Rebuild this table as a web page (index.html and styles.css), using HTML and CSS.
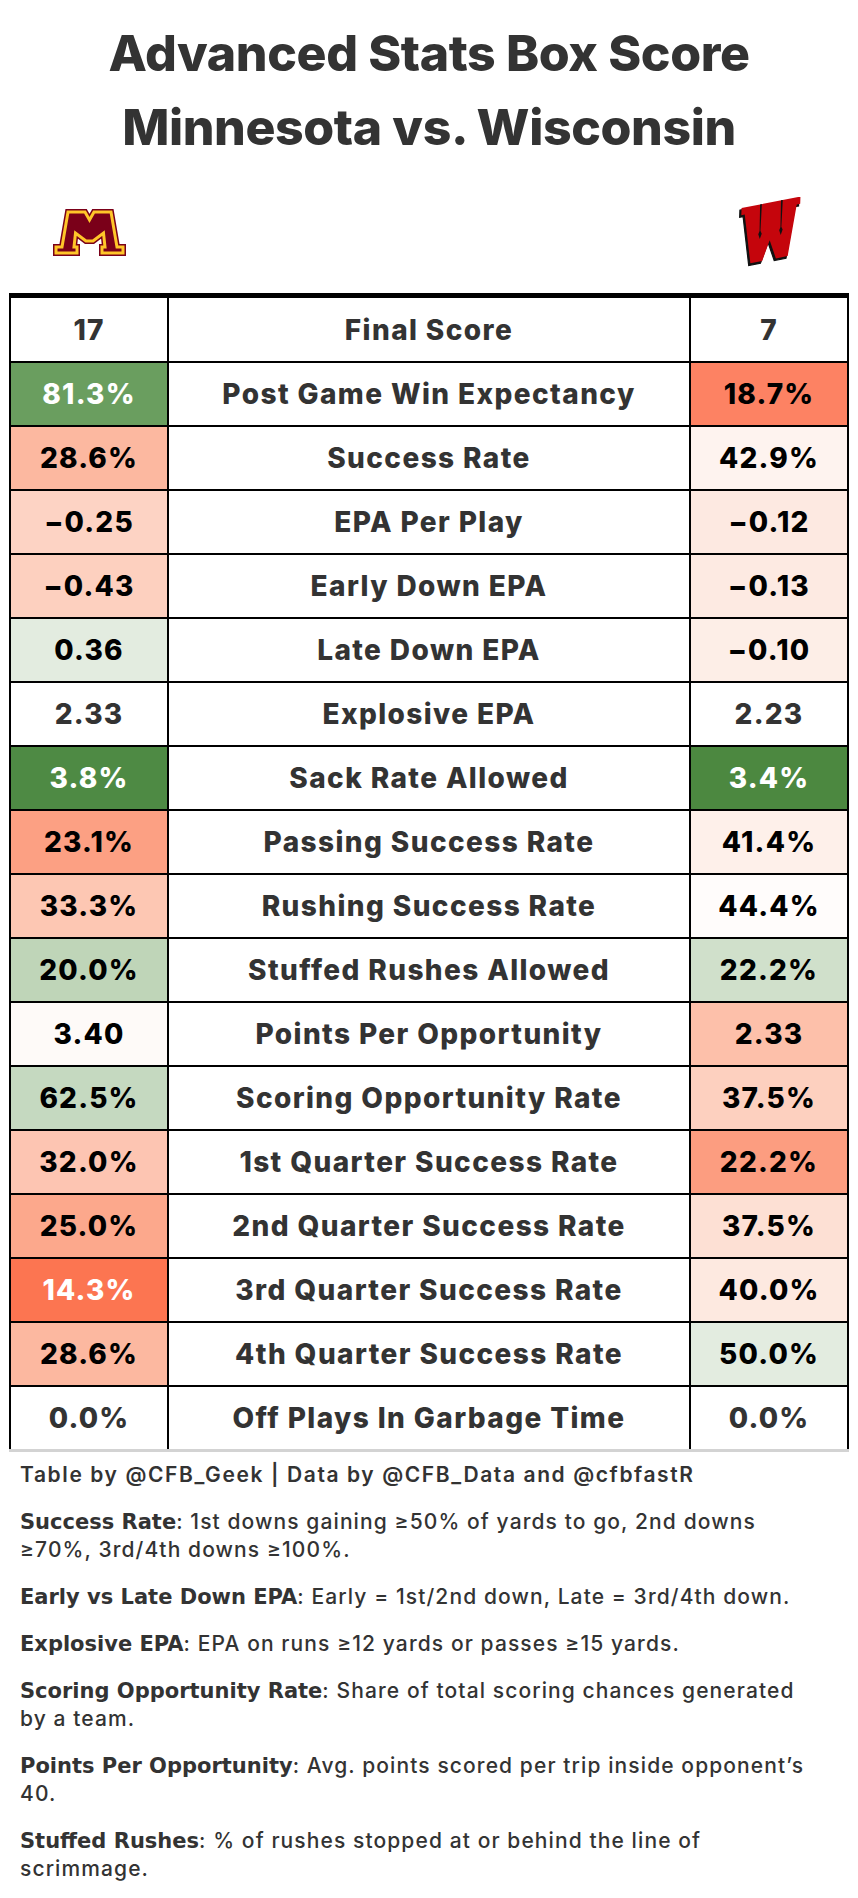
FILE: index.html
```html
<!DOCTYPE html>
<html lang="en">
<head>
<meta charset="utf-8">
<title>Advanced Stats Box Score</title>
<link rel="stylesheet" href="styles.css">
</head>
<body>
<div class="page">
  <h1 class="title">Advanced Stats Box Score<br>Minnesota vs. Wisconsin</h1>

  <div class="logos">
    <div class="logo-cell">
      <svg class="logo-m" viewBox="0 0 75 49" width="75" height="49" aria-label="Minnesota">
        <path d="M16,4 H33 L37.5,12 L42,4 H59 L65,39 H71 V45 H50 V39 H53 L51.5,25 L41,33 H34 L23.5,25 L22,39 H25 V45 H4 V39 H10 Z" fill="#7a0019" stroke="#7a0019" stroke-width="6"/>
        <path d="M16,4 H33 L37.5,12 L42,4 H59 L65,39 H71 V45 H50 V39 H53 L51.5,25 L41,33 H34 L23.5,25 L22,39 H25 V45 H4 V39 H10 Z" fill="#7a0019" stroke="#ffc629" stroke-width="3"/>
      </svg>
    </div>
    <div></div>
    <div class="logo-cell">
      <svg class="logo-w" viewBox="0 0 70 70" width="70" height="70" aria-label="Wisconsin">
        <g transform="translate(36 34) rotate(-11) skewX(-13) translate(-30 -28)">
          <path transform="translate(-1.6 1.8)" d="M0,0 H60 V7 H56.5 L49,56 H37 L30,37 L23,56 H11 L3.5,7 H0 Z" fill="#111" stroke="#111" stroke-width="1.2"/>
          <path d="M0,0 H60 V7 H56.5 L49,56 H37 L30,37 L23,56 H11 L3.5,7 H0 Z" fill="#c5050c"/>
          <path d="M18.9,0 H20.7 L20.2,26 L21.6,29 L19.8,34 L18.1,29 L19.3,26 Z" fill="#111"/>
          <path d="M40.2,0 H42 L41.5,26 L42.9,29 L41.1,34 L39.4,29 L40.6,26 Z" fill="#111"/>
        </g>
      </svg>
    </div>
  </div>

  <div class="box">
    <div class="cell">17</div><div class="cell label">Final Score</div><div class="cell">7</div>

    <div class="cell on-dark" style="background:#6a9e5f">81.3%</div><div class="cell label">Post Game Win Expectancy</div><div class="cell val" style="background:#fd8263">18.7%</div>

    <div class="cell val" style="background:#fcb8a0">28.6%</div><div class="cell label">Success Rate</div><div class="cell val" style="background:#fef3ef">42.9%</div>

    <div class="cell val" style="background:#fdd3c4">−0.25</div><div class="cell label">EPA Per Play</div><div class="cell val" style="background:#fde9e1">−0.12</div>

    <div class="cell val" style="background:#fdd0bf">−0.43</div><div class="cell label">Early Down EPA</div><div class="cell val" style="background:#fdeae2">−0.13</div>

    <div class="cell val" style="background:#e3ece0">0.36</div><div class="cell label">Late Down EPA</div><div class="cell val" style="background:#fdeee7">−0.10</div>

    <div class="cell">2.33</div><div class="cell label">Explosive EPA</div><div class="cell">2.23</div>

    <div class="cell on-dark" style="background:#4e8a44">3.8%</div><div class="cell label">Sack Rate Allowed</div><div class="cell on-dark" style="background:#4c8840">3.4%</div>

    <div class="cell val" style="background:#fca083">23.1%</div><div class="cell label">Passing Success Rate</div><div class="cell val" style="background:#fef0ea">41.4%</div>

    <div class="cell val" style="background:#fdc7b3">33.3%</div><div class="cell label">Rushing Success Rate</div><div class="cell val" style="background:#fffcfb">44.4%</div>

    <div class="cell val" style="background:#bfd5b8">20.0%</div><div class="cell label">Stuffed Rushes Allowed</div><div class="cell val" style="background:#d0e0cb">22.2%</div>

    <div class="cell val" style="background:#fefaf8">3.40</div><div class="cell label">Points Per Opportunity</div><div class="cell val" style="background:#fdc0aa">2.33</div>

    <div class="cell val" style="background:#c5d9c0">62.5%</div><div class="cell label">Scoring Opportunity Rate</div><div class="cell val" style="background:#fdd0bf">37.5%</div>

    <div class="cell val" style="background:#fdc5b2">32.0%</div><div class="cell label">1st Quarter Success Rate</div><div class="cell val" style="background:#fc9d80">22.2%</div>

    <div class="cell val" style="background:#fca88c">25.0%</div><div class="cell label">2nd Quarter Success Rate</div><div class="cell val" style="background:#fde0d4">37.5%</div>

    <div class="cell on-dark" style="background:#fc7551">14.3%</div><div class="cell label">3rd Quarter Success Rate</div><div class="cell val" style="background:#fde9e0">40.0%</div>

    <div class="cell val" style="background:#fcb8a0">28.6%</div><div class="cell label">4th Quarter Success Rate</div><div class="cell val" style="background:#e3ece0">50.0%</div>

    <div class="cell">0.0%</div><div class="cell label">Off Plays In Garbage Time</div><div class="cell">0.0%</div>
  </div>

  <div class="notes">
    <p class="credit">Table by @CFB_Geek | Data by @CFB_Data and @cfbfastR</p>
    <p><b>Success Rate</b>: 1st downs gaining ≥50% of yards to go, 2nd downs ≥70%, 3rd/4th downs ≥100%.</p>
    <p><b>Early vs Late Down EPA</b>: Early = 1st/2nd down, Late = 3rd/4th down.</p>
    <p><b>Explosive EPA</b>: EPA on runs ≥12 yards or passes ≥15 yards.</p>
    <p><b>Scoring Opportunity Rate</b>: Share of total scoring chances generated by a team.</p>
    <p><b>Points Per Opportunity</b>: Avg. points scored per trip inside opponent’s 40.</p>
    <p><b>Stuffed Rushes</b>: % of rushes stopped at or behind the line of scrimmage.</p>
  </div>
</div>
</body>
</html>
```

FILE: styles.css
```css
body {
  margin: 0;
  background: #fff;
  font-family: Inter, "Liberation Sans", sans-serif;
  color: #333;
}

.page {
  width: 840px;
  padding: 0 9px;
}

.title {
  margin: 0;
  padding-top: 16px;
  font-size: 50px;
  line-height: 74px;
  font-weight: 800;
  text-align: center;
  color: #333;
  letter-spacing: -0.4px;
}

.logos {
  display: grid;
  grid-template-columns: 160px 520px 160px;
  height: 122px;
  padding-top: 7px;
  align-items: center;
}

.logo-cell {
  display: flex;
  justify-content: center;
  align-items: center;
}

.logo-m,
.logo-w {
  display: block;
}

.box {
  display: grid;
  grid-template-columns: 156px 520px 156px;
  grid-template-rows: 63px;
  grid-auto-rows: 62px;
  gap: 2px;
  background: #000;
  padding: 5px 2px 0;
  border-bottom: 3px solid #d3d3d3;
}

.cell {
  display: flex;
  align-items: center;
  justify-content: center;
  background: #fff;
  font-size: 28px;
  font-weight: 800;
  letter-spacing: 1.2px;
  color: #333;
}

.cell.label {
  letter-spacing: 1.4px;
}

.cell.val {
  color: #000;
}

.cell.on-dark {
  color: #fff;
}

.notes {
  padding: 9px 11px 0;
  width: 804px;
  font-size: 21px;
  line-height: 28px;
  font-weight: 500;
  letter-spacing: 1.1px;
  color: #333;
}

.notes p {
  margin: 0 0 19px;
}

.notes .credit {
  font-weight: 600;
  letter-spacing: 1.6px;
}

.notes b {
  font-family: "DejaVu Sans", Inter, sans-serif;
  font-weight: 700;
  letter-spacing: 0;
}
```
